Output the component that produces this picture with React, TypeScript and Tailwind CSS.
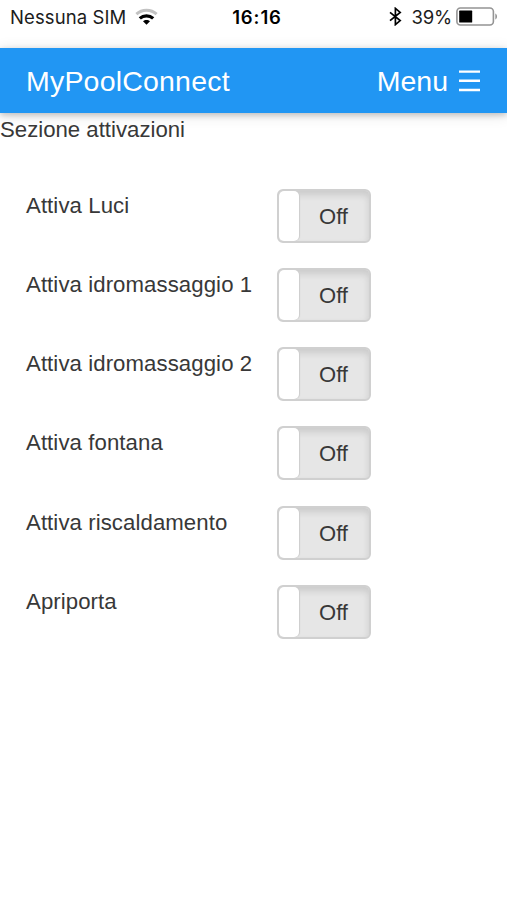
import { useState } from 'react'

const sections = [
  { id: 'luci', label: 'Attiva Luci' },
  { id: 'idro1', label: 'Attiva idromassaggio 1' },
  { id: 'idro2', label: 'Attiva idromassaggio 2' },
  { id: 'fontana', label: 'Attiva fontana' },
  { id: 'riscaldamento', label: 'Attiva riscaldamento' },
  { id: 'porta', label: 'Apriporta' },
]

function StatusBar() {
  return (
    <div className="grid h-12 grid-cols-3 pt-[5px] pr-[8px] pl-[10px] font-['Inter',sans-serif] text-[18.5px] leading-6 text-[#1c1c1c]">
      <div className="flex items-start whitespace-nowrap">
        <span className="tracking-[0.1px]">Nessuna SIM</span>
        <svg className="mt-[3px] ml-[9px] shrink-0" width="23" height="17" viewBox="0 0 23 17" fill="none">
          <path d="M1.4 6.2C7 .8 16 .8 21.6 6.2" stroke="#c2c2c2" strokeWidth="3" />
          <path d="M4.8 10.4C8.6 6.9 14.4 6.9 18.2 10.4" stroke="#000" strokeWidth="3.2" />
          <path d="M8 13.2C9.8 11.6 13.2 11.6 15 13.2L11.5 16.8Z" fill="#000" />
        </svg>
      </div>
      <div className="pl-[5px] text-center font-semibold tracking-[0.9px] text-black">16:16</div>
      <div className="flex items-start justify-end whitespace-nowrap">
        <svg className="mt-[2px] mr-[10px] shrink-0" width="13" height="19" viewBox="0 0 13 19" fill="none">
          <path d="M1 5.3L11.2 13.6L6.4 17.6V1.4L11.2 5.4L1 13.7" stroke="#000" strokeWidth="1.7" />
        </svg>
        <span className="tracking-[-0.2px]">39%</span>
        <svg className="mt-[2px] mr-px ml-[4px] shrink-0" width="42" height="19" viewBox="0 0 42 19">
          <rect x="0.9" y="1" width="36.5" height="17" rx="3.5" fill="#fff" stroke="#949494" strokeWidth="1.6" />
          <rect x="3.2" y="3.6" width="13" height="12" rx="0.6" fill="#000" />
          <path d="M39.3 6.5C41.6 7.5 41.6 11.5 39.3 12.5Z" fill="#949494" />
        </svg>
      </div>
    </div>
  )
}

function Toggle({ on, onChange }: { on: boolean; onChange: () => void }) {
  return (
    <button
      type="button"
      role="switch"
      aria-checked={on}
      onClick={onChange}
      className="flex h-[54px] w-[94px] overflow-hidden rounded-[6px] border-2 border-[#d0d0d0] bg-[#e6e6e6] shadow-[inset_0_4px_7px_rgba(0,0,0,0.12)]"
    >
      <span className="h-full w-[20px] shrink-0 rounded-[5px] bg-white shadow-[1px_0_1px_#cccccc]" />
      <span className="flex h-full flex-1 items-center justify-center pt-px pr-px text-[22px]">
        {on ? 'On' : 'Off'}
      </span>
    </button>
  )
}

export default function App() {
  const [active, setActive] = useState<Record<string, boolean>>({})

  return (
    <div className="min-h-screen bg-white font-['Liberation_Sans',sans-serif] text-[22.2px] text-[#383838]">
      <StatusBar />

      <nav className="flex h-[65px] items-center justify-between bg-[#2196f3] px-[26px] pt-px text-[28.5px] text-white shadow-[0_2px_6px_rgba(0,0,0,0.2),0_2px_14px_rgba(0,0,0,0.12)]">
        <a className="tracking-[0.2px]">MyPoolConnect</a>
        <a className="flex items-center gap-[11px] pr-px">
          Menu
          <svg className="mb-px" width="21" height="22" viewBox="0 0 21 22" stroke="#fff" strokeWidth="2.4">
            <path d="M0 1.6H21M0 10.8H21M0 20H21" />
          </svg>
        </a>
      </nav>

      <h1 className="pt-px leading-8">Sezione attivazioni</h1>

      <div className="mt-[42.8px] flex flex-col gap-[25.2px] pl-[26px]">
        {sections.map((s) => (
          <div key={s.id} className="flex h-[54px] items-start">
            <span className="w-[251px] shrink-0 pt-px leading-8 tracking-[0.08px] whitespace-nowrap">
              {s.label}
            </span>
            <Toggle
              on={!!active[s.id]}
              onChange={() => setActive({ ...active, [s.id]: !active[s.id] })}
            />
          </div>
        ))}
      </div>
    </div>
  )
}
